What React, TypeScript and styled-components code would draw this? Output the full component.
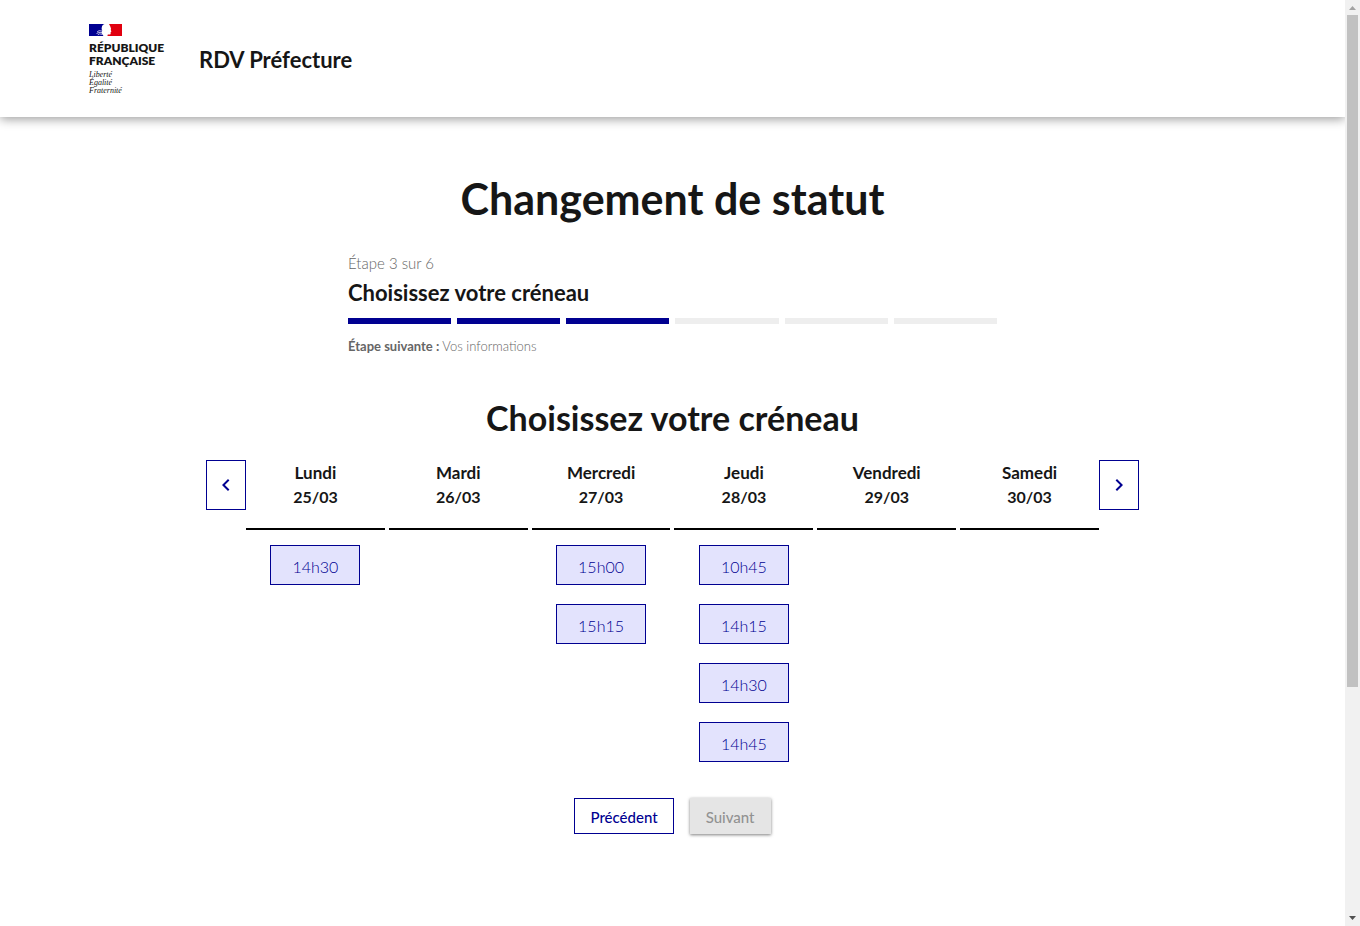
import React from "react";
import styled, { createGlobalStyle } from "styled-components";

const BLUE = "#000091";
const INK = "#161616";

const GlobalStyle = createGlobalStyle`
  *, *::before, *::after { box-sizing: border-box; }
  body {
    margin: 0;
    background: #fff;
    color: ${INK};
    font-family: Lato, "Open Sans", sans-serif;
    font-size: 16px;
    line-height: 24px;
  }
  h1, h2, p { margin: 0; }
  button { font-family: inherit; cursor: pointer; }
`;

const Shell = styled.div`
  display: flex;
  min-height: 100vh;
`;

const Page = styled.div`
  flex: 1;
  min-width: 0;
`;

const Header = styled.header`
  display: flex;
  align-items: center;
  gap: 32px;
  padding: 24px 89px 22px;
  box-shadow: 0 2px 10px rgba(0, 0, 0, 0.4);
  clip-path: inset(0 0 -24px 0);
`;

const Brand = styled.div`
  display: flex;
  flex-direction: column;
  align-items: flex-start;
  min-width: 78px;
`;

const Flag = styled.svg`
  display: block;
  width: 33px;
  height: 12px;
`;

const BrandName = styled.p`
  margin-top: 5px;
  font-size: 12px;
  line-height: 13px;
  font-weight: 800;
  white-space: nowrap;
`;

const Motto = styled.p`
  margin-top: 4px;
  font-family: "Liberation Serif", serif;
  font-size: 8px;
  line-height: 8px;
  font-style: italic;
`;

const ServiceLink = styled.a`
  color: ${INK};
  font-size: 22px;
  line-height: 28px;
  font-weight: 700;
  text-decoration: none;
`;

const Main = styled.main`
  display: flex;
  flex-direction: column;
  align-items: center;
  padding: 58px 16px 92px;
`;

const PageTitle = styled.h1`
  font-size: 43px;
  line-height: 48px;
  font-weight: 700;
`;

const Stepper = styled.section`
  width: 100%;
  max-width: 649px;
  margin-top: 28px;
`;

const StepState = styled.p`
  color: #666;
  font-size: 15px;
  line-height: 24px;
  font-weight: 300;
`;

const StepTitle = styled.h2`
  margin-top: 4px;
  font-size: 22px;
  line-height: 28px;
  font-weight: 700;
`;

const Steps = styled.div`
  display: grid;
  grid-template-columns: repeat(6, 1fr);
  gap: 6px;
  margin-top: 11px;
`;

const Step = styled.span<{ $done: boolean }>`
  height: 6px;
  background: ${({ $done }) => ($done ? BLUE : "#eee")};
`;

const NextStep = styled.p`
  margin-top: 12px;
  color: #666;
  font-size: 13px;
  line-height: 20px;
  font-weight: 300;

  strong { font-weight: 700; }
`;

const SectionTitle = styled.h2`
  margin-top: 42px;
  font-size: 34px;
  line-height: 40px;
  font-weight: 700;
`;

const Calendar = styled.div`
  display: flex;
  align-items: flex-start;
  width: 100%;
  max-width: 933px;
  margin-top: 22px;
`;

const ArrowButton = styled.button`
  display: flex;
  align-items: center;
  justify-content: center;
  flex: none;
  width: 40px;
  height: 50px;
  padding: 0;
  border: 1px solid ${BLUE};
  background: #fff;
  color: ${BLUE};
`;

const Days = styled.div`
  display: grid;
  flex: 1;
  grid-template-columns: repeat(6, 1fr);
  gap: 4px;
`;

const Day = styled.section`
  display: flex;
  flex-direction: column;
`;

const DayTitle = styled.h2`
  display: flex;
  flex-direction: column;
  align-items: center;
  height: 70px;
  padding-top: 1px;
  border-bottom: 2px solid #000;
  font-size: 17px;
  line-height: 24px;
  font-weight: 700;
`;

const DayDate = styled.span`
  font-size: 16px;
`;

const Slots = styled.div`
  display: flex;
  flex-direction: column;
  align-items: center;
  gap: 19px;
  padding-top: 15px;
`;

const SlotButton = styled.button`
  width: 90px;
  height: 40px;
  padding: 3px 0 0;
  border: 1px solid ${BLUE};
  background: #e3e3fd;
  color: ${BLUE};
  font-size: 16px;
  line-height: 24px;
  font-weight: 300;
`;

const Actions = styled.div`
  display: flex;
  gap: 16px;
  margin-top: 36px;
`;

const ActionButton = styled.button`
  height: 36px;
  padding: 2px 15px 0;
  border: 1px solid ${BLUE};
  background: #fff;
  color: ${BLUE};
  font-size: 15px;
  line-height: 24px;
  font-weight: 500;

  &:disabled {
    border-color: #e5e5e5;
    background: #e5e5e5;
    color: #929292;
    cursor: not-allowed;
    box-shadow: 0 1px 3px rgba(0, 0, 0, 0.5);
  }
`;

const ScrollBar = styled.div`
  display: flex;
  flex-direction: column;
  flex: none;
  width: 15px;
  background: #f1f1f1;
`;

const ScrollEnd = styled.svg`
  display: block;
  flex: none;
  width: 15px;
  height: 15px;
`;

const ScrollTrack = styled.div`
  flex: 1;
  display: grid;
  grid-template-rows: 3fr 1fr;
  padding: 0 2px;
`;

const ScrollThumb = styled.div`
  background: #c1c1c1;
`;

const STEP_COUNT = 6;
const CURRENT_STEP = 3;

const DAYS = [
  { name: "Lundi", date: "25/03", slots: ["14h30"] },
  { name: "Mardi", date: "26/03", slots: [] },
  { name: "Mercredi", date: "27/03", slots: ["15h00", "15h15"] },
  { name: "Jeudi", date: "28/03", slots: ["10h45", "14h15", "14h30", "14h45"] },
  { name: "Vendredi", date: "29/03", slots: [] },
  { name: "Samedi", date: "30/03", slots: [] },
];

function Chevron({ direction }: { direction: "left" | "right" }) {
  return (
    <svg width="24" height="24" viewBox="0 0 24 24" fill="currentColor" aria-hidden="true">
      {direction === "left" ? (
        <path d="M15.41 7.41 14 6l-6 6 6 6 1.41-1.41L10.83 12z" />
      ) : (
        <path d="M10 6 8.59 7.41 13.17 12l-4.58 4.59L10 18l6-6z" />
      )}
    </svg>
  );
}

export default function App() {
  return (
    <>
      <GlobalStyle />
      <Shell>
        <Page>
          <Header>
            <Brand>
              <Flag viewBox="0 0 33 12" aria-hidden="true">
                <path fill="#000091" d="M0 0h15.500c-1.500.5-2.600 1.700-2.700 3.200L12.600 5l.6 1.500-.7 2.500 2 3H0z" />
                <path fill="#e1000f" d="M33 0v12H18.400l.4-1.400 2.400-.2.500-1-.1-1.200.8-.7-.6-1.600.2-1.400-.7-2L20 0z" />
                <path
                  fill="none"
                  stroke="#fff"
                  strokeWidth=".7"
                  d="M8 8l2-1.300 3.200.3M7.500 9.500l2.500-1 3.500.2M8.800 10.800l1.700-.9 3 .5"
                />
              </Flag>
              <BrandName>
                RÉPUBLIQUE
                <br />
                FRANÇAISE
              </BrandName>
              <Motto>
                Liberté
                <br />
                Égalité
                <br />
                Fraternité
              </Motto>
            </Brand>
            <ServiceLink href="#">RDV Préfecture</ServiceLink>
          </Header>
          <Main>
            <PageTitle>Changement de statut</PageTitle>
            <Stepper>
              <StepState>Étape 3 sur 6</StepState>
              <StepTitle>Choisissez votre créneau</StepTitle>
              <Steps>
                {Array.from({ length: STEP_COUNT }, (_, i) => (
                  <Step key={i} $done={i < CURRENT_STEP} />
                ))}
              </Steps>
              <NextStep>
                <strong>Étape suivante :</strong> Vos informations
              </NextStep>
            </Stepper>
            <SectionTitle>Choisissez votre créneau</SectionTitle>
            <Calendar>
              <ArrowButton aria-label="Semaine précédente">
                <Chevron direction="left" />
              </ArrowButton>
              <Days>
                {DAYS.map((day) => (
                  <Day key={day.date}>
                    <DayTitle>
                      <span>{day.name}</span>
                      <DayDate>{day.date}</DayDate>
                    </DayTitle>
                    <Slots>
                      {day.slots.map((slot) => (
                        <SlotButton key={slot}>{slot}</SlotButton>
                      ))}
                    </Slots>
                  </Day>
                ))}
              </Days>
              <ArrowButton aria-label="Semaine suivante">
                <Chevron direction="right" />
              </ArrowButton>
            </Calendar>
            <Actions>
              <ActionButton>Précédent</ActionButton>
              <ActionButton disabled>Suivant</ActionButton>
            </Actions>
          </Main>
        </Page>
        <ScrollBar aria-hidden="true">
          <ScrollEnd viewBox="0 0 15 15">
            <path fill="#a3a3a3" d="M7.500 6 11 10H4z" />
          </ScrollEnd>
          <ScrollTrack>
            <ScrollThumb />
          </ScrollTrack>
          <ScrollEnd viewBox="0 0 15 15">
            <path fill="#505050" d="M4 5h7L7.500 9z" />
          </ScrollEnd>
        </ScrollBar>
      </Shell>
    </>
  );
}
